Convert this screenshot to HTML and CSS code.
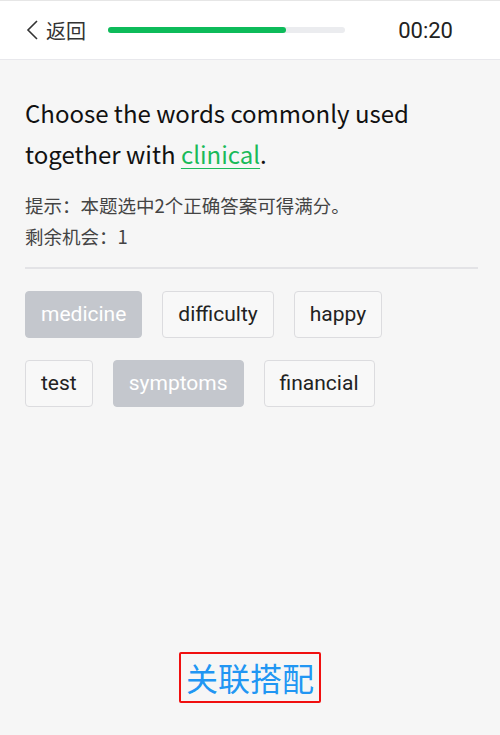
FILE: index.html
```html
<!DOCTYPE html>
<html lang="zh-CN">
<head>
    <meta charset="UTF-8">
    <meta name="viewport" content="width=device-width, initial-scale=1.0">
    <title>关联搭配</title>
    <link rel="stylesheet" href="styles.css">
</head>
<body>

<div class="header">
    <div class="back">
        <svg class="back-icon" width="14" height="20" viewBox="0 0 14 20"><path d="M12 1 L3 10 L12 19" fill="none" stroke="#333" stroke-width="1.6"/></svg>
        <span>返回</span>
    </div>
    <div class="progress"><div class="progress-fill" style="width: 75%;"></div></div>
    <div class="timer">00:20</div>
</div>

<div class="content">
    <p class="question">Choose the words commonly used together with <span class="keyword">clinical</span>.</p>
    <p class="hint">提示：本题选中2个正确答案可得满分。</p>
    <p class="hint">剩余机会：1</p>
    <div class="divider"></div>

    <div class="words">
        <div class="word-row">
            <span class="word selected">medicine</span>
            <span class="word">difficulty</span>
            <span class="word">happy</span>
        </div>
        <div class="word-row">
            <span class="word">test</span>
            <span class="word selected">symptoms</span>
            <span class="word">financial</span>
        </div>
    </div>
</div>

<div class="footer">
    <span class="title-box">关联搭配</span>
</div>

</body>
</html>
```

FILE: styles.css
```css
body { margin: 0; background-color: #f6f6f6; font-family: Roboto, 'Noto Sans CJK SC', sans-serif; height: 735px; display: flex; flex-direction: column; }
.header { background: #fff; border-top: 1px solid #e6e6e6; border-bottom: 1px solid #e8e8ec; height: 58px; display: flex; align-items: center; padding: 0 25px; }
.back { display: flex; align-items: center; color: #333; font-size: 20px; font-family: 'Noto Sans CJK SC', sans-serif; }
.back-icon { margin-right: 7px; }
.progress { width: 237px; height: 6px; background: #ebecef; border-radius: 3px; margin-left: 22px; }
.progress-fill { height: 100%; background: #0dbb5a; border-radius: 3px; }
.timer { margin-left: auto; margin-right: 22px; font-size: 22px; color: #222; }
.content { padding: 0 22px 0 25px; }
.question { font-family: 'Noto Sans CJK SC', sans-serif; font-size: 24px; line-height: 41px; color: #111; margin: 32px 0 16px; }
.keyword { color: #1aba5a; text-decoration: underline; text-decoration-thickness: 1px; text-underline-offset: 4px; }
.hint { font-family: 'Noto Sans CJK SC', sans-serif; font-size: 18.5px; line-height: 31px; color: #444; margin: 0; }
.divider { height: 2px; background: #e3e3e6; margin-top: 15px; }
.words { display: flex; flex-direction: column; gap: 22px; margin-top: 22px; }
.word-row { display: flex; gap: 20px; }
.word { height: 45px; line-height: 45px; padding: 0 15px; font-size: 21px; color: #222; background: #f8f8f8; border: 1px solid #dcdcdf; border-radius: 4px; }
.word.selected { background: #c4c7cd; border-color: #c4c7cd; color: #fff; }
.footer { margin-top: auto; margin-bottom: 32px; text-align: center; }
.title-box { display: inline-block; border: 2px solid #f01010; border-radius: 2px; padding: 0 5px; font-family: 'Noto Sans CJK SC', sans-serif; font-size: 32px; line-height: 47px; color: #2196f3; }
```
